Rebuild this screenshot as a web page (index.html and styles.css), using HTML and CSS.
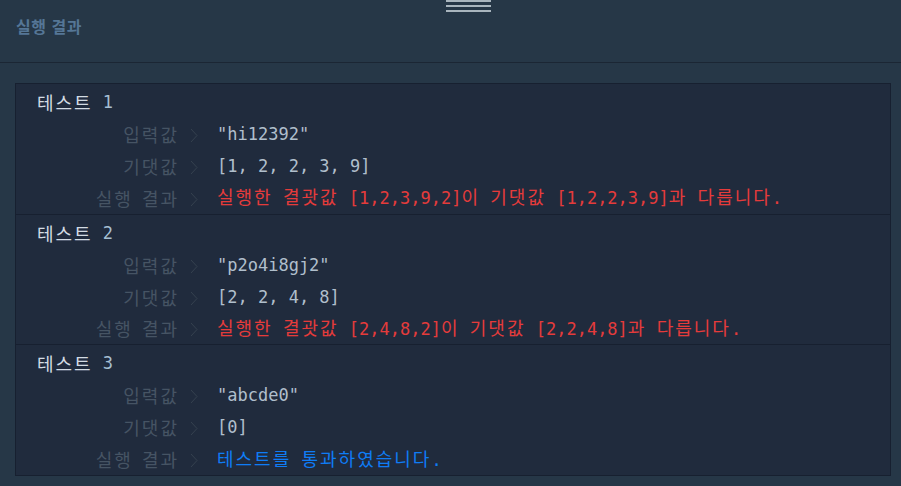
FILE: index.html
```html
<!DOCTYPE html>
<html lang="ko">
<head>
    <meta charset="UTF-8">
    <meta name="viewport" content="width=device-width, initial-scale=1.0">
    <title>실행 결과</title>
    <link rel="stylesheet" href="styles.css">
</head>
<body>
    <header class="panel-head">
        <div class="handle"><span></span><span></span><span></span></div>
        <h2>실행 결과</h2>
    </header>

    <main class="results">
        <section class="case">
            <div class="case-title"><span class="ko">테스트</span> <span class="num">1</span></div>
            <div class="row">
                <span class="label ko">입력값</span>
                <span class="chev"><svg width="8" height="15" viewBox="0 0 8 15"><polyline points="1,1 7,7.5 1,14"/></svg></span>
                <span class="value">"hi12392"</span>
            </div>
            <div class="row">
                <span class="label ko">기댓값</span>
                <span class="chev"><svg width="8" height="15" viewBox="0 0 8 15"><polyline points="1,1 7,7.5 1,14"/></svg></span>
                <span class="value">[1, 2, 2, 3, 9]</span>
            </div>
            <div class="row">
                <span class="label ko">실행 결과</span>
                <span class="chev"><svg width="8" height="15" viewBox="0 0 8 15"><polyline points="1,1 7,7.5 1,14"/></svg></span>
                <span class="value fail"><span class="ko">실행한</span> <span class="ko">결괏값</span> [1,2,3,9,2]<span class="ko">이</span> <span class="ko">기댓값</span> [1,2,2,3,9]<span class="ko">과</span> <span class="ko">다릅니다</span>.</span>
            </div>
        </section>

        <section class="case">
            <div class="case-title"><span class="ko">테스트</span> <span class="num">2</span></div>
            <div class="row">
                <span class="label ko">입력값</span>
                <span class="chev"><svg width="8" height="15" viewBox="0 0 8 15"><polyline points="1,1 7,7.5 1,14"/></svg></span>
                <span class="value">"p2o4i8gj2"</span>
            </div>
            <div class="row">
                <span class="label ko">기댓값</span>
                <span class="chev"><svg width="8" height="15" viewBox="0 0 8 15"><polyline points="1,1 7,7.5 1,14"/></svg></span>
                <span class="value">[2, 2, 4, 8]</span>
            </div>
            <div class="row">
                <span class="label ko">실행 결과</span>
                <span class="chev"><svg width="8" height="15" viewBox="0 0 8 15"><polyline points="1,1 7,7.5 1,14"/></svg></span>
                <span class="value fail"><span class="ko">실행한</span> <span class="ko">결괏값</span> [2,4,8,2]<span class="ko">이</span> <span class="ko">기댓값</span> [2,2,4,8]<span class="ko">과</span> <span class="ko">다릅니다</span>.</span>
            </div>
        </section>

        <section class="case">
            <div class="case-title"><span class="ko">테스트</span> <span class="num">3</span></div>
            <div class="row">
                <span class="label ko">입력값</span>
                <span class="chev"><svg width="8" height="15" viewBox="0 0 8 15"><polyline points="1,1 7,7.5 1,14"/></svg></span>
                <span class="value">"abcde0"</span>
            </div>
            <div class="row">
                <span class="label ko">기댓값</span>
                <span class="chev"><svg width="8" height="15" viewBox="0 0 8 15"><polyline points="1,1 7,7.5 1,14"/></svg></span>
                <span class="value">[0]</span>
            </div>
            <div class="row">
                <span class="label ko">실행 결과</span>
                <span class="chev"><svg width="8" height="15" viewBox="0 0 8 15"><polyline points="1,1 7,7.5 1,14"/></svg></span>
                <span class="value pass"><span class="ko">테스트를</span> <span class="ko">통과하였습니다</span>.</span>
            </div>
        </section>
    </main>
</body>
</html>
```

FILE: styles.css
```css
:root {
    --page-bg: #263747;
    --box-bg: #202b3d;
    --box-line: #172030;
    --label: #465464;
    --value: #b0bfcc;
    --fail: #e53b3b;
    --pass: #0f7cf5;
}

* {
    box-sizing: border-box;
    margin: 0;
    padding: 0;
}

body {
    background-color: var(--page-bg);
    font-family: "DejaVu Sans Mono", "Noto Sans CJK KR", monospace;
    min-height: 100vh;
}

.panel-head {
    position: relative;
    height: 63px;
    border-bottom: 1px solid #1b2634;
    padding: 14px 16px 0;
}

.panel-head h2 {
    font-family: "Noto Sans CJK KR", sans-serif;
    font-size: 16px;
    font-weight: 700;
    line-height: 24px;
    letter-spacing: 0.5px;
    color: #557696;
}

/* drag handle on top edge */
.handle {
    position: absolute;
    top: 0;
    left: 446px;
    width: 45px;
    display: flex;
    flex-direction: column;
    gap: 3px;
}

.handle span {
    display: block;
    height: 2px;
    background-color: #a9b5be;
}

.results {
    margin: 20px 10px 0 15px;
    background-color: var(--box-bg);
    border: 1px solid var(--box-line);
}

.case {
    padding: 6px 0 0 21px;
    border-bottom: 1px solid var(--box-line);
}

.case:last-child {
    border-bottom: none;
}

/* hangul runs: wider pitch than the mono font gives */
.ko {
    font-family: "Noto Sans CJK KR", sans-serif;
    font-size: 18px;
    letter-spacing: 2px;
    line-height: 1;
}

.case-title {
    height: 24px;
    display: flex;
    align-items: center;
    gap: 10px;
    font-size: 17px;
    color: #d2dbe3;
    margin-bottom: 4px;
}

.case-title .num {
    color: #a6bfd2;
}

.row {
    display: grid;
    grid-template-columns: 142px 38px 1fr;
    height: 31.9px;
    align-items: center;
    font-size: 17px;
}

.label {
    text-align: right;
    color: var(--label);
    word-spacing: 2px;
}

.chev {
    display: flex;
    padding-left: 11px;
    padding-top: 3px;
}

.chev polyline {
    fill: none;
    stroke: #35414f;
    stroke-width: 1;
}

.value {
    color: var(--value);
    white-space: nowrap;
}

.value.fail {
    color: var(--fail);
}

.value.pass {
    color: var(--pass);
}
```
